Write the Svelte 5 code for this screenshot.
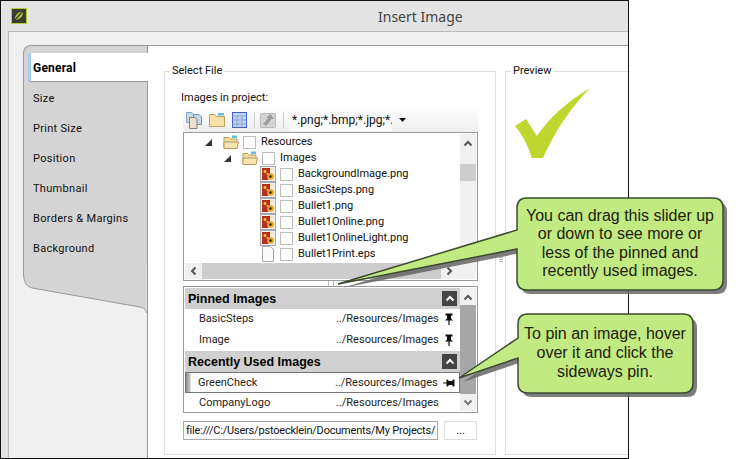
<script lang="ts">
  // Insert Image dialog with two annotation callouts on top
  const tabs = ["Size", "Print Size", "Position", "Thumbnail", "Borders & Margins", "Background"];

  const files = [
    { name: "BackgroundImage.png", kind: "img" },
    { name: "BasicSteps.png", kind: "img" },
    { name: "Bullet1.png", kind: "img" },
    { name: "Bullet1Online.png", kind: "img" },
    { name: "Bullet1OnlineLight.png", kind: "img" },
    { name: "Bullet1Print.eps", kind: "doc" }
  ];

  const pinned = ["BasicSteps", "Image"];
  const imagesPath = "../Resources/Images/";
</script>

{#snippet chevronUp()}
  <svg class="chev" width="10" height="7" viewBox="0 0 10 7"><path d="M1.500 5.500 L5 2 L8.500 5.500" fill="none" stroke="currentColor" stroke-width="2" /></svg>
{/snippet}

{#snippet chevronDown()}
  <svg class="chev" width="10" height="7" viewBox="0 0 10 7"><path d="M1.500 1.500 L5 5 L8.500 1.500" fill="none" stroke="currentColor" stroke-width="2" /></svg>
{/snippet}

{#snippet twisty()}
  <svg class="twisty" width="7" height="7" viewBox="0 0 7 7"><path d="M0 7 L7 0 V7 Z" fill="#333" /></svg>
{/snippet}

{#snippet openFolder()}
  <svg class="icon" width="16" height="16" viewBox="0 0 16 16">
    <path d="M1 3.500 H6 L7.500 5 H14 V14 H1 Z" fill="#f3dca4" stroke="#b89a5c" />
    <path d="M9 1.500 H14 V4 H9 Z" fill="#5fc0d8" />
    <path d="M1 8 H15.500 L14 14.500 H1 Z" fill="#f8e4b0" stroke="#b89a5c" />
  </svg>
{/snippet}

{#snippet imageFile()}
  <svg class="icon" width="16" height="16" viewBox="0 0 16 16">
    <rect x="0.500" y="0.500" width="15" height="15" fill="#f2f2f2" stroke="#a8a8a8" />
    <rect x="2" y="2" width="12" height="12" fill="#efe6d6" />
    <path d="M2 2 H10 V8 L8 10 V14 H2 Z" fill="#b4301c" />
    <circle cx="5" cy="5.500" r="1.600" fill="#eccb4a" />
    <circle cx="7.500" cy="8" r="1" fill="#eccb4a" />
    <circle cx="10.500" cy="10.500" r="3.300" fill="#eaa41e" />
    <circle cx="10.500" cy="10.500" r="1.300" fill="#222222" />
  </svg>
{/snippet}

{#snippet docFile()}
  <svg class="icon" width="16" height="16" viewBox="0 0 16 16">
    <path d="M2.500 0.500 H10.500 L13.500 3.500 V15.500 H2.500 Z" fill="#fafafa" stroke="#aaaaaa" />
  </svg>
{/snippet}

{#snippet pinUp()}
  <svg class="pin" width="10" height="12" viewBox="0 0 10 12"><path d="M1.500 0.500 H8.500 V2.500 H7 V5.500 L9 7.500 H5.600 V12 H4.400 V7.500 H1 L3 5.500 V2.500 H1.500 Z" fill="#111" /></svg>
{/snippet}

{#snippet pinSide()}
  <svg class="pin" width="12" height="10" viewBox="0 0 12 10"><path d="M0 4.500 H3.500 V1.500 H4.500 L6 3 H9.500 V1.500 H11.500 V8.500 H9.500 V7 H6 L4.500 8.500 H3.500 V5.500 H0 Z" fill="#111" /></svg>
{/snippet}

<div class="page">
  <div class="window">
    <header class="titlebar">
      <svg class="logo" width="16" height="16" viewBox="0 0 16 16">
        <rect x="0.500" y="0.500" width="15" height="15" fill="#3c3c32" stroke="#b4cc2c" />
        <path d="M4 12 Q3 5 12 3 Q13 10 5 12 Z" fill="#a8bc34" />
        <path d="M3 13 L12 3" stroke="#3c3c32" stroke-width="1.200" />
      </svg>
      <h1>Insert Image</h1>
    </header>

    <div class="shell">
      <nav class="sidebar">
        <div class="tabs">
          <div class="tab active">General</div>
          {#each tabs as tab}
            <div class="tab">{tab}</div>
          {/each}
        </div>
        <svg class="tabs-end" width="124" height="50" viewBox="0 0 124 50">
          <path d="M0.500 0 V12 Q1 23 9 25 L117 44 Q123 45 123.500 50 V0 Z" fill="#d4d4d4" />
          <path d="M0.500 0 V12 Q1 23 9 25 L117 44 Q123 45 123.500 50" fill="none" stroke="#999999" />
        </svg>
      </nav>

      <main class="content">
        <fieldset class="select-file">
          <legend>Select File</legend>
          <div class="list-label">Images in project:</div>

          <div class="toolbar">
            <svg class="tool" width="16" height="18" viewBox="0 0 16 18">
              <path d="M0.500 1.500 H6 L8 3.500 V11.500 H0.500 Z" fill="#c6d8ea" stroke="#8aa4bc" />
              <path d="M7.500 3.500 H13 L15.500 6 V13.500 H7.500 Z" fill="#c6d8ea" stroke="#6c94bc" />
              <path d="M3.500 6.500 H9 L11 8.500 V17.500 H3.500 Z" fill="#ece0d0" stroke="#8c7c68" />
            </svg>
            <svg class="tool" width="16" height="16" viewBox="0 0 16 16">
              <path d="M0.500 2.500 H6 L7.500 4.500 H15.500 V14.500 H0.500 Z" fill="#f6e0a8" stroke="#c0a060" />
              <path d="M9 1 H15 V3.500 H9 Z" fill="#5fc0d8" />
            </svg>
            <svg class="tool" width="15" height="16" viewBox="0 0 15 16">
              <rect x="0.500" y="0.500" width="14" height="15" fill="#c4d4f4" stroke="#3c62c0" />
              <path d="M0.500 4 H14.500 M0.500 8 H14.500 M0.500 12 H14.500 M5 4 V15.500 M10 4 V15.500" stroke="#86a0dc" />
            </svg>
            <span class="sep"></span>
            <svg class="tool" width="16" height="16" viewBox="0 0 16 16">
              <rect x="0.500" y="1.500" width="15" height="14" rx="1" fill="#d4d4d4" stroke="#b8b8b8" />
              <path d="M3 12 L8.500 6 H6 L10.500 2 L14 7 H11.500 L6.500 14 Z" fill="#9c9c9c" />
            </svg>
            <span class="sep"></span>
            <span class="filter">*.png;*.bmp;*.jpg;*.gif</span>
            <svg class="caret" width="7" height="4" viewBox="0 0 7 4"><path d="M0 0 H7 L3.500 4 Z" fill="#111" /></svg>
          </div>

          <div class="tree">
            <div class="tree-main">
              <div class="tree-rows">
                <div class="row lvl0">
                  <span class="slot">{@render twisty()}</span>
                  {@render openFolder()}
                  <span class="check"></span>
                  <span>Resources</span>
                </div>
                <div class="row lvl1">
                  <span class="slot">{@render twisty()}</span>
                  {@render openFolder()}
                  <span class="check"></span>
                  <span>Images</span>
                </div>
                {#each files as file}
                  <div class="row lvl2">
                    {#if file.kind === "img"}
                      {@render imageFile()}
                    {:else}
                      {@render docFile()}
                    {/if}
                    <span class="check"></span>
                    <span>{file.name}</span>
                  </div>
                {/each}
              </div>
              <div class="hscroll">
                <svg class="chev" width="7" height="10" viewBox="0 0 7 10"><path d="M5.500 1.500 L2 5 L5.500 8.500" fill="none" stroke="#555" stroke-width="2" /></svg>
                <div class="hthumb"></div>
                <svg class="chev" width="7" height="10" viewBox="0 0 7 10"><path d="M1.500 1.500 L5 5 L1.500 8.500" fill="none" stroke="#555" stroke-width="2" /></svg>
              </div>
            </div>
            <div class="vscroll">
              <div class="arrow">{@render chevronUp()}</div>
              <div class="vthumb"></div>
            </div>
          </div>

          <div class="splitter"><span></span></div>

          <div class="recent">
            <div class="recent-main">
              <div class="group">
                <span>Pinned Images</span>
                <span class="collapse">{@render chevronUp()}</span>
              </div>
              {#each pinned as item}
                <div class="item pinned">
                  <span class="item-name">{item}</span>
                  <span class="item-path">{imagesPath}</span>
                  {@render pinUp()}
                </div>
              {/each}
              <div class="group">
                <span>Recently Used Images</span>
                <span class="collapse">{@render chevronUp()}</span>
              </div>
              <div class="item hovered">
                <span class="item-name">GreenCheck</span>
                <span class="item-path">{imagesPath}</span>
                {@render pinSide()}
              </div>
              <div class="item">
                <span class="item-name">CompanyLogo</span>
                <span class="item-path wide">{imagesPath}</span>
              </div>
            </div>
            <div class="vscroll dark">
              <div class="arrow">{@render chevronUp()}</div>
              <div class="vthumb"></div>
              <div class="arrow down">{@render chevronDown()}</div>
            </div>
          </div>

          <div class="path-row">
            <input type="text" readonly value="file:///C:/Users/pstoecklein/Documents/My Projects/Resources/Images/GreenCheck.png" />
            <button type="button">...</button>
          </div>
        </fieldset>

        <div class="divider">
          <span></span><span></span><span></span>
        </div>

        <fieldset class="preview">
          <legend>Preview</legend>
          <svg class="check-mark" width="76" height="71" viewBox="0 0 76 71">
            <path d="M75 0 Q40 21 22 48 L11 31 L0 38 Q10 49 17 70 H28 Q45 31 75 0 Z" fill="#bfd62f" />
          </svg>
        </fieldset>
      </main>
    </div>
  </div>

  <svg class="callouts" width="738" height="459" viewBox="0 0 738 459">
    <path class="shadow" d="M527 198 H713 Q723 198 723 208 V280 Q723 290 713 290 H527 Q517 290 517 280 V249 L338 284 L517 230 V208 Q517 198 527 198 Z" />
    <path class="bubble" d="M527 198 H713 Q723 198 723 208 V280 Q723 290 713 290 H527 Q517 290 517 280 V249 L338 284 L517 230 V208 Q517 198 527 198 Z" />
    <path class="shadow" d="M528 314 H683 Q693 314 693 324 V383 Q693 393 683 393 H528 Q518 393 518 383 V358 L459 378 L518 338 V324 Q518 314 528 314 Z" />
    <path class="bubble" d="M528 314 H683 Q693 314 693 324 V383 Q693 393 683 393 H528 Q518 393 518 383 V358 L459 378 L518 338 V324 Q518 314 528 314 Z" />
  </svg>
  <p class="note note-slider">You can drag this slider up or down to see more or less of the pinned and recently used images.</p>
  <p class="note note-pin">To pin an image, hover over it and click the sideways pin.</p>
</div>

<style>
  :global(body) {
    background: #fff;
  }

  .page {
    position: relative;
    width: 738px;
    height: 459px;
    overflow: hidden;
    background: #fff;
    font-family: Roboto, sans-serif;
    font-size: 11px;
    color: #111;
  }

  .window {
    box-sizing: border-box;
    width: 629px;
    height: 459px;
    display: flex;
    flex-direction: column;
    border: 1px solid #111;
    background: #e3e3e3;
    overflow: hidden;
  }

  .titlebar {
    flex: none;
    box-sizing: border-box;
    height: 30px;
    display: flex;
    align-items: center;
    padding-left: 10px;
  }

  .titlebar h1 {
    margin: 0 0 0 351px;
    font-family: "Noto Sans", sans-serif;
    font-size: 14px;
    font-weight: 400;
    color: #444;
  }

  .logo {
    flex: none;
  }

  .shell {
    flex: 1;
    min-height: 0;
    display: flex;
    margin-left: 7px;
    padding-top: 13px;
    background: #f0f0f0;
    border-top: 1px solid #bbb;
    border-left: 1px solid #bbb;
  }

  .sidebar {
    flex: none;
    box-sizing: border-box;
    width: 139px;
    padding-left: 14px;
    border-right: 1px solid #999;
  }

  .tabs {
    box-sizing: border-box;
    width: 124px;
    padding: 7px 0 1px 4px;
    background: #d4d4d4;
    border: 1px solid #999;
    border-width: 1px 0 0 1px;
    border-top-left-radius: 8px;
  }

  .tab {
    height: 30px;
    line-height: 34px;
    padding-left: 5px;
    letter-spacing: 0.3px;
  }

  .active {
    box-sizing: border-box;
    height: 29px;
    line-height: 31px;
    margin-right: -1px;
    background: #fff;
    border-bottom: 1px solid #999;
    border-left: 3px solid #a6ccf4;
    border-top-left-radius: 3px;
    border-bottom-left-radius: 3px;
    padding-left: 2px;
    font-size: 12px;
    font-weight: 700;
    letter-spacing: 0.2px;
    color: #000;
  }

  .tabs-end {
    display: block;
  }

  .content {
    flex: 1;
    min-width: 0;
    display: flex;
    align-items: stretch;
    padding: 17px 0 3px 16px;
    background: #fff;
    border-top: 1px solid #999;
    overflow: hidden;
  }

  fieldset {
    box-sizing: border-box;
    min-width: 0;
    margin: 0;
    border: 1px solid #ddd;
  }

  legend {
    padding: 0 2px;
    line-height: 16px;
  }

  .select-file {
    flex: none;
    width: 332px;
    padding: 9px 17px 0 18px;
  }

  .select-file legend {
    margin-left: -13px;
  }

  .list-label {
    margin-left: -2px;
    height: 19px;
    line-height: 20px;
  }

  .toolbar {
    box-sizing: border-box;
    height: 25px;
    display: flex;
    align-items: center;
    padding-left: 3px;
    background: linear-gradient(#ffffff, #eeeeee);
  }

  .tool {
    flex: none;
    margin-right: 7px;
  }

  .sep {
    width: 1px;
    height: 16px;
    background: #cfcfcf;
    margin: 0 5px 0 0;
  }

  .filter {
    width: 100px;
    height: 22px;
    line-height: 22px;
    padding-left: 3px;
    background: #fafafa;
    font-size: 12px;
    white-space: nowrap;
    overflow: hidden;
  }

  .caret {
    margin-left: 7px;
  }

  .tree {
    box-sizing: border-box;
    height: 149px;
    display: flex;
    border: 1px solid #999;
    padding: 1px;
    background: #fff;
  }

  .tree-main {
    flex: 1;
    min-width: 0;
    display: flex;
    flex-direction: column;
  }

  .tree-rows {
    flex: 1;
  }

  .row {
    height: 16px;
    display: flex;
    align-items: center;
    line-height: 16px;
    white-space: nowrap;
    color: #111;
  }

  .lvl0 {
    padding-left: 20px;
  }

  .lvl1 {
    padding-left: 39px;
  }

  .lvl2 {
    padding-left: 75px;
  }

  .slot {
    width: 18px;
    flex: none;
    display: flex;
  }

  .icon {
    flex: none;
  }

  .check {
    flex: none;
    box-sizing: border-box;
    width: 13px;
    height: 13px;
    margin: 0 5px 0 4px;
    background: #fff;
    border: 1px solid #bbb;
  }

  .hscroll {
    flex: none;
    height: 16px;
    display: flex;
    align-items: center;
    background: #f0f0f0;
    padding: 0 7px 0 5px;
    gap: 5px;
  }

  .hthumb {
    flex: 1;
    height: 16px;
    background: #cdcdcd;
  }

  .vscroll {
    flex: none;
    width: 16px;
    display: flex;
    flex-direction: column;
    background: #f0f0f0;
    color: #555;
  }

  .arrow {
    flex: none;
    height: 16px;
    margin-top: 1px;
    display: flex;
    align-items: center;
    justify-content: center;
    color: #555;
  }

  .tree .vthumb {
    height: 17px;
    margin-top: 13px;
    background: #cdcdcd;
  }

  .dark .vthumb {
    flex: 1;
    background: #a6a6a6;
  }

  .dark .arrow.down {
    height: 17px;
    margin: 0;
    color: #777;
  }

  .splitter {
    height: 5px;
    display: flex;
    justify-content: center;
  }

  .splitter span {
    width: 4px;
    height: 5px;
    border-left: 1px solid #bbb;
    border-right: 1px solid #bbb;
  }

  .recent {
    box-sizing: border-box;
    height: 127px;
    display: flex;
    border: 1px solid #999;
    padding: 1px;
    background: #fff;
  }

  .recent-main {
    flex: 1;
    min-width: 0;
  }

  .group {
    box-sizing: border-box;
    height: 21px;
    display: flex;
    align-items: center;
    justify-content: space-between;
    padding: 0 3px;
    background: #d0d0d0;
    font-family: "Liberation Sans", sans-serif;
    font-size: 12.500px;
    font-weight: 700;
    color: #000;
  }

  .collapse {
    width: 15px;
    height: 15px;
    display: flex;
    align-items: center;
    justify-content: center;
    background: #444;
    color: #fff;
  }

  .item {
    box-sizing: border-box;
    height: 21px;
    display: flex;
    align-items: center;
    padding-bottom: 2px;
    white-space: nowrap;
    color: #222;
  }

  .item-name {
    width: 137px;
    padding-left: 14px;
    flex: none;
  }

  .item-path {
    width: 103px;
    flex: none;
    overflow: hidden;
  }

  .pin {
    flex: none;
    margin-left: 5px;
  }

  .hovered {
    background: #fff;
    border: 1px solid #777;
    padding-bottom: 0;
    position: relative;
  }

  .hovered::before {
    content: "";
    position: absolute;
    left: 0;
    top: 0;
    bottom: 0;
    width: 5px;
    background: linear-gradient(90deg, #888, #ddd);
  }

  .hovered .item-name {
    padding-left: 12px;
  }

  .path-row {
    display: flex;
    gap: 6px;
    margin-top: 8px;
  }

  input {
    box-sizing: border-box;
    width: 255px;
    height: 19px;
    padding: 0 1px 0 2px;
    border: 1px solid #aaa;
    font: inherit;
    letter-spacing: -0.2px;
    color: #111;
    background: #fff;
    outline: none;
  }

  button {
    box-sizing: border-box;
    width: 33px;
    height: 19px;
    padding: 0;
    border: 1px solid #ddd;
    background: #fff;
    font: inherit;
    color: #111;
  }

  .divider {
    flex: none;
    width: 9px;
    display: flex;
    flex-direction: column;
    align-items: center;
    justify-content: center;
    gap: 1px;
  }

  .divider span {
    width: 4px;
    height: 1px;
    background: #bbb;
  }

  .preview {
    flex: 1;
    min-width: 0;
    padding: 9px 0 0 9px;
    border-right: 0;
  }

  .preview legend {
    margin-left: -4px;
  }

  .check-mark {
    display: block;
  }

  .callouts {
    position: absolute;
    left: 0;
    top: 0;
  }

  .shadow {
    fill: #666;
    opacity: 0.85;
    transform: translate(4px, 4px);
  }

  .bubble {
    fill: #c2ea82;
    stroke: #3c4a30;
    stroke-width: 1.500;
  }

  .note {
    position: absolute;
    margin: 0;
    font-family: "Liberation Sans", sans-serif;
    font-size: 16px;
    line-height: 18.300px;
    text-align: center;
    color: #1c1c0c;
  }

  .note-slider {
    left: 522px;
    top: 207px;
    width: 196px;
  }

  .note-pin {
    left: 522px;
    top: 324px;
    width: 166px;
    line-height: 19px;
  }
</style>
